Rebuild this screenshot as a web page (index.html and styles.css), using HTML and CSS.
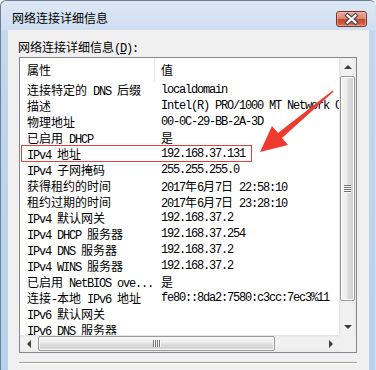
FILE: index.html
```html
<!DOCTYPE html>
<html lang="zh-CN">
<head>
<meta charset="utf-8">
<title>网络连接详细信息</title>
<link rel="stylesheet" href="styles.css">
</head>
<body>
<div class="window">
  <div class="titlebar">
    <span class="title">网络连接详细信息</span>
    <div class="close">
      <svg width="29" height="14" viewBox="0 0 29 14">
        <path d="M10.5 3.5 L18.5 10.5 M18.5 3.5 L10.5 10.5" stroke="#4a4a4a" stroke-width="4.4" stroke-linecap="square" fill="none"/>
        <path d="M10.5 3.5 L18.5 10.5 M18.5 3.5 L10.5 10.5" stroke="#ffffff" stroke-width="2.2" stroke-linecap="square" fill="none"/>
      </svg>
    </div>
  </div>
  <div class="client">
    <div class="label t"><span class="zh">网络连接详细信息</span>(<u>D</u>):</div>
    <div class="listbox">
      <div class="listview t">
        <div class="header">
          <div class="h1"><span class="zh">属性</span></div>
          <div class="h2"><span class="zh">值</span></div>
        </div>
        <div class="row"><div class="c1"><span class="zh">连接特定的</span> DNS <span class="zh">后缀</span></div><div class="c2">localdomain</div></div>
        <div class="row"><div class="c1"><span class="zh">描述</span></div><div class="c2">Intel(R) PRO/1000 MT Network Connection</div></div>
        <div class="row"><div class="c1"><span class="zh">物理地址</span></div><div class="c2">00-0C-29-BB-2A-3D</div></div>
        <div class="row"><div class="c1"><span class="zh">已启用</span> DHCP</div><div class="c2"><span class="zh">是</span></div></div>
        <div class="row"><div class="c1">IPv4 <span class="zh">地址</span></div><div class="c2">192.168.37.131</div></div>
        <div class="row"><div class="c1">IPv4 <span class="zh">子网掩码</span></div><div class="c2">255.255.255.0</div></div>
        <div class="row"><div class="c1"><span class="zh">获得租约的时间</span></div><div class="c2">2017<span class="zh">年</span>6<span class="zh">月</span>7<span class="zh">日</span> 22:58:10</div></div>
        <div class="row"><div class="c1"><span class="zh">租约过期的时间</span></div><div class="c2">2017<span class="zh">年</span>6<span class="zh">月</span>7<span class="zh">日</span> 23:28:10</div></div>
        <div class="row"><div class="c1">IPv4 <span class="zh">默认网关</span></div><div class="c2">192.168.37.2</div></div>
        <div class="row"><div class="c1">IPv4 DHCP <span class="zh">服务器</span></div><div class="c2">192.168.37.254</div></div>
        <div class="row"><div class="c1">IPv4 DNS <span class="zh">服务器</span></div><div class="c2">192.168.37.2</div></div>
        <div class="row"><div class="c1">IPv4 WINS <span class="zh">服务器</span></div><div class="c2">192.168.37.2</div></div>
        <div class="row"><div class="c1"><span class="zh">已启用</span> NetBIOS ove...</div><div class="c2"><span class="zh">是</span></div></div>
        <div class="row"><div class="c1"><span class="zh">连接</span>-<span class="zh">本地</span> IPv6 <span class="zh">地址</span></div><div class="c2">fe80::8da2:7580:c3cc:7ec3%11</div></div>
        <div class="row"><div class="c1">IPv6 <span class="zh">默认网关</span></div><div class="c2"></div></div>
        <div class="row"><div class="c1">IPv6 DNS <span class="zh">服务器</span></div><div class="c2"></div></div>
        <div class="highlight"></div>
      </div>
      <div class="vscroll">
        <div class="sbtn"><span class="arr-up"></span></div>
        <div class="vthumb"></div>
        <div class="vspace"></div>
        <div class="sbtn"><span class="arr-down"></span></div>
      </div>
      <div class="hscroll">
        <div class="sbtn"><span class="arr-left"></span></div>
        <div class="hthumb"></div>
        <div class="hspace"></div>
        <div class="sbtn"><span class="arr-right"></span></div>
      </div>
      <div class="corner"></div>
    </div>
    <div class="separator"></div>
  </div>
</div>
<svg class="annot" width="376" height="370" viewBox="0 0 376 370">
  <polygon points="260,152 272,126 278,133 332.6,90.4 333.6,91.6 282,138 288,145" fill="#ee3a2f"/>
</svg>
</body>
</html>
```

FILE: styles.css
```css
html, body {
  margin: 0;
  padding: 0;
}
body {
  width: 376px;
  height: 370px;
  overflow: hidden;
  background: #ffffff;
  position: relative;
}
.window {
  box-sizing: border-box;
  width: 376px;
  height: 370px;
  border: 1px solid #6f7f95;
  border-right-color: #d3e2f3;
  border-bottom: none;
  border-radius: 6px 6px 0 0;
  background: linear-gradient(to bottom, #dde8f5 0, #cfdef1 29px, #c3d7ee 30px, #b9d1ec 100%);
  display: flex;
  flex-direction: column;
}
.titlebar {
  flex: none;
  height: 29px;
  display: flex;
  justify-content: space-between;
  align-items: flex-start;
}
.title {
  margin: 9px 0 0 11px;
  font: 12px/16px "Noto Sans CJK SC", sans-serif;
  color: #000;
}
.close {
  box-sizing: border-box;
  margin: 10px 8px 0 0;
  width: 31px;
  height: 16px;
  border: 1px solid #7b3226;
  border-radius: 3px;
  background: linear-gradient(to bottom, #e9a998 0%, #de8c78 45%, #c74a35 52%, #cc5a42 80%, #d97a5e 100%);
  box-shadow: inset 0 0 0 1px rgba(255, 210, 200, 0.45);
  display: flex;
  align-items: center;
  justify-content: center;
}
.close svg {
  display: block;
}
.client {
  flex: 1;
  margin: 0 6px 0 7px;
  background: #f0f0f0;
  padding-top: 9px;
}
.t {
  font-family: "Liberation Mono", "Noto Sans CJK SC", monospace;
  font-size: 12px;
  line-height: 16px;
  letter-spacing: -1.2px;
  color: #000;
}
.zh {
  font-family: "Noto Sans CJK SC", sans-serif;
  letter-spacing: 0;
}
.label {
  height: 16px;
  margin-left: 10px;
  white-space: nowrap;
}
.listbox {
  box-sizing: border-box;
  margin: 2px 0 0 11px;
  width: 338px;
  height: 296px;
  border: 1px solid #828790;
  background: #fff;
  display: grid;
  grid-template-columns: 319px 17px;
  grid-template-rows: 277px 17px;
}
.listview {
  position: relative;
  overflow: hidden;
  white-space: nowrap;
}
.header {
  display: flex;
  height: 24px;
  background: #fff;
}
.h1 {
  box-sizing: border-box;
  width: 135px;
  padding-left: 7px;
  border-right: 1px solid #e3e6ea;
  display: flex;
  align-items: center;
}
.h2 {
  padding-left: 6px;
  display: flex;
  align-items: center;
}
.row {
  display: flex;
  height: 16px;
  line-height: 16px;
  overflow: hidden;
}
.c1 {
  box-sizing: border-box;
  width: 135px;
  flex: none;
  padding-left: 7px;
  overflow: hidden;
}
.c2 {
  flex: none;
  padding-left: 6px;
}
.highlight {
  position: absolute;
  left: 1px;
  top: 87px;
  width: 231px;
  height: 17px;
  box-sizing: border-box;
  border: 1px solid #e2403a;
}
.vscroll {
  display: flex;
  flex-direction: column;
  background: linear-gradient(to right, #e4e4e4 0, #f1f1f1 3px, #f1f1f1 13px, #e9e9e9 100%);
}
.hscroll {
  display: flex;
  background: linear-gradient(to bottom, #e4e4e4 0, #f1f1f1 3px, #f1f1f1 13px, #e9e9e9 100%);
}
.corner {
  background: #f0f0f0;
}
.sbtn {
  flex: none;
  width: 17px;
  height: 17px;
  display: flex;
  align-items: center;
  justify-content: center;
}
.arr-up, .arr-down, .arr-left, .arr-right {
  width: 0;
  height: 0;
}
.arr-up {
  border-left: 4px solid transparent;
  border-right: 4px solid transparent;
  border-bottom: 4px solid #3c3c3c;
}
.arr-down {
  border-left: 4px solid transparent;
  border-right: 4px solid transparent;
  border-top: 4px solid #3c3c3c;
}
.arr-left {
  border-top: 4px solid transparent;
  border-bottom: 4px solid transparent;
  border-right: 4px solid #3c3c3c;
}
.arr-right {
  border-top: 4px solid transparent;
  border-bottom: 4px solid transparent;
  border-left: 4px solid #3c3c3c;
}
.vthumb {
  box-sizing: border-box;
  flex: none;
  height: 225px;
  margin: 1px 1px 0 1px;
  border: 1px solid #989898;
  border-radius: 2px;
  background: linear-gradient(to right, #f6f6f6 0%, #ececec 45%, #dcdcdc 55%, #d0d0d0 100%);
  box-shadow: inset 0 0 0 1px #fbfbfb;
  display: flex;
  align-items: center;
  justify-content: center;
}
.vthumb::after {
  content: "";
  width: 7px;
  height: 8px;
  background: repeating-linear-gradient(to bottom, #6f6f6f 0, #6f6f6f 1px, #fafafa 1px, #fafafa 2px);
}
.vspace {
  flex: 1;
}
.hthumb {
  box-sizing: border-box;
  flex: none;
  width: 237px;
  margin: 1px 0 1px 1px;
  border: 1px solid #989898;
  border-radius: 2px;
  background: linear-gradient(to bottom, #f6f6f6 0%, #ececec 45%, #dcdcdc 55%, #d0d0d0 100%);
  box-shadow: inset 0 0 0 1px #fbfbfb;
  display: flex;
  align-items: center;
  justify-content: center;
}
.hthumb::after {
  content: "";
  width: 8px;
  height: 7px;
  background: repeating-linear-gradient(to right, #6f6f6f 0, #6f6f6f 1px, #fafafa 1px, #fafafa 2px);
}
.hspace {
  flex: 1;
}
.separator {
  margin: 9px 0 0 11px;
  width: 338px;
  height: 0;
  border-top: 1px solid #a0a0a0;
  border-bottom: 1px solid #ffffff;
}
.annot {
  position: absolute;
  left: 0;
  top: 0;
  pointer-events: none;
}
```
